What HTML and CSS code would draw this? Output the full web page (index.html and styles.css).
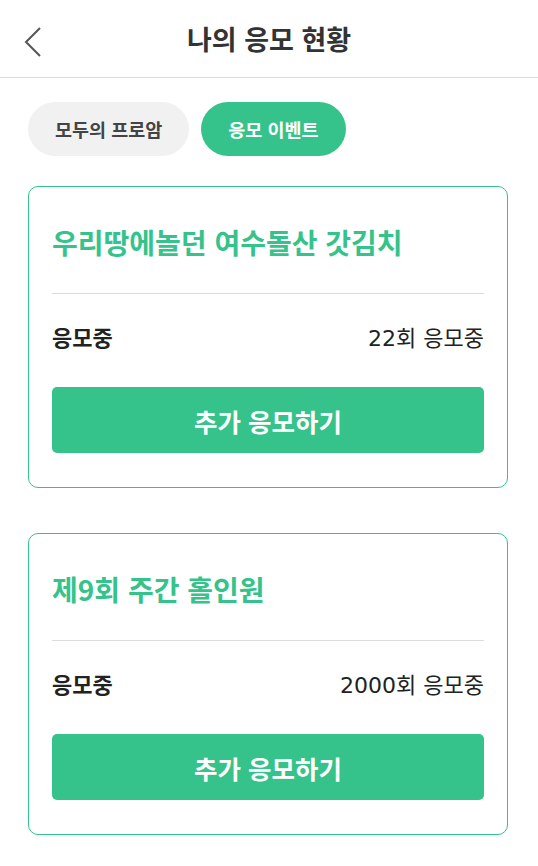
FILE: index.html
```html
<!DOCTYPE html>
<html lang="ko">
<head>
    <meta charset="UTF-8">
    <meta name="viewport" content="width=device-width, initial-scale=1.0">
    <title>나의 응모 현황</title>
    <link rel="stylesheet" href="styles.css">
</head>
<body>
    <header class="topbar">
        <button class="back" aria-label="뒤로">
            <svg width="22" height="32" viewBox="0 0 22 32">
                <path d="M18 2 L4 16 L18 30" fill="none" stroke="#555" stroke-width="2"/>
            </svg>
        </button>
        <h1>나의 응모 현황</h1>
    </header>

    <nav class="tabs">
        <button class="tab">모두의 프로암</button>
        <button class="tab active">응모 이벤트</button>
    </nav>

    <div class="list">
        <div class="card">
            <h2 class="card-title">우리땅에놀던 여수돌산 갓김치</h2>
            <div class="row">
                <span class="label">응모중</span>
                <span class="value">22회 응모중</span>
            </div>
            <button class="apply">추가 응모하기</button>
        </div>

        <div class="card">
            <h2 class="card-title">제9회 주간 홀인원</h2>
            <div class="row">
                <span class="label">응모중</span>
                <span class="value">2000회 응모중</span>
            </div>
            <button class="apply">추가 응모하기</button>
        </div>
    </div>
</body>
</html>
```

FILE: styles.css
```css
body {
    font-family: "Noto Sans CJK KR", "Noto Sans", sans-serif;
    background: #fff;
    color: #222;
    margin: 0;
}
button {
    font-family: inherit;
    border: none;
    cursor: pointer;
}
.topbar {
    position: relative;
    height: 77px;
    border-bottom: 1px solid #dcdcdc;
    display: flex;
    align-items: center;
    justify-content: center;
}
.topbar h1 {
    margin: 0;
    font-size: 27px;
    font-weight: 700;
    color: #333;
}
.back {
    position: absolute;
    left: 22px;
    top: 26px;
    background: none;
    padding: 0;
    display: flex;
}
.tabs {
    display: flex;
    gap: 12px;
    padding: 24px 28px 0;
}
.tab {
    height: 54px;
    padding: 0 27px;
    border-radius: 27px;
    font-size: 18.5px;
    font-weight: 700;
    background: #f1f1f1;
    color: #444;
}
.tab.active {
    background: #35c38b;
    color: #fff;
}
.list {
    display: flex;
    flex-direction: column;
    gap: 45px;
    padding: 30px 30px 0 28px;
}
.card {
    border: 1px solid #35c38b;
    border-radius: 10px;
    padding: 0 23px 34px;
}
.card-title {
    margin: 0;
    padding: 37px 0 33px;
    font-size: 28px;
    line-height: 36px;
    font-weight: 700;
    color: #35c38b;
    border-bottom: 1px solid #dcdcdc;
}
.row {
    display: flex;
    justify-content: space-between;
    align-items: baseline;
    height: 24px;
    padding: 30px 0 39px;
    font-size: 22px;
    line-height: 24px;
}
.label {
    font-weight: 700;
}
.value {
    font-family: "DejaVu Sans", "Noto Sans CJK KR", sans-serif;
    color: #222;
}
.apply {
    display: block;
    width: 100%;
    height: 66px;
    border-radius: 5px;
    background: #35c38b;
    color: #fff;
    font-size: 25.5px;
    font-weight: 700;
}
```
